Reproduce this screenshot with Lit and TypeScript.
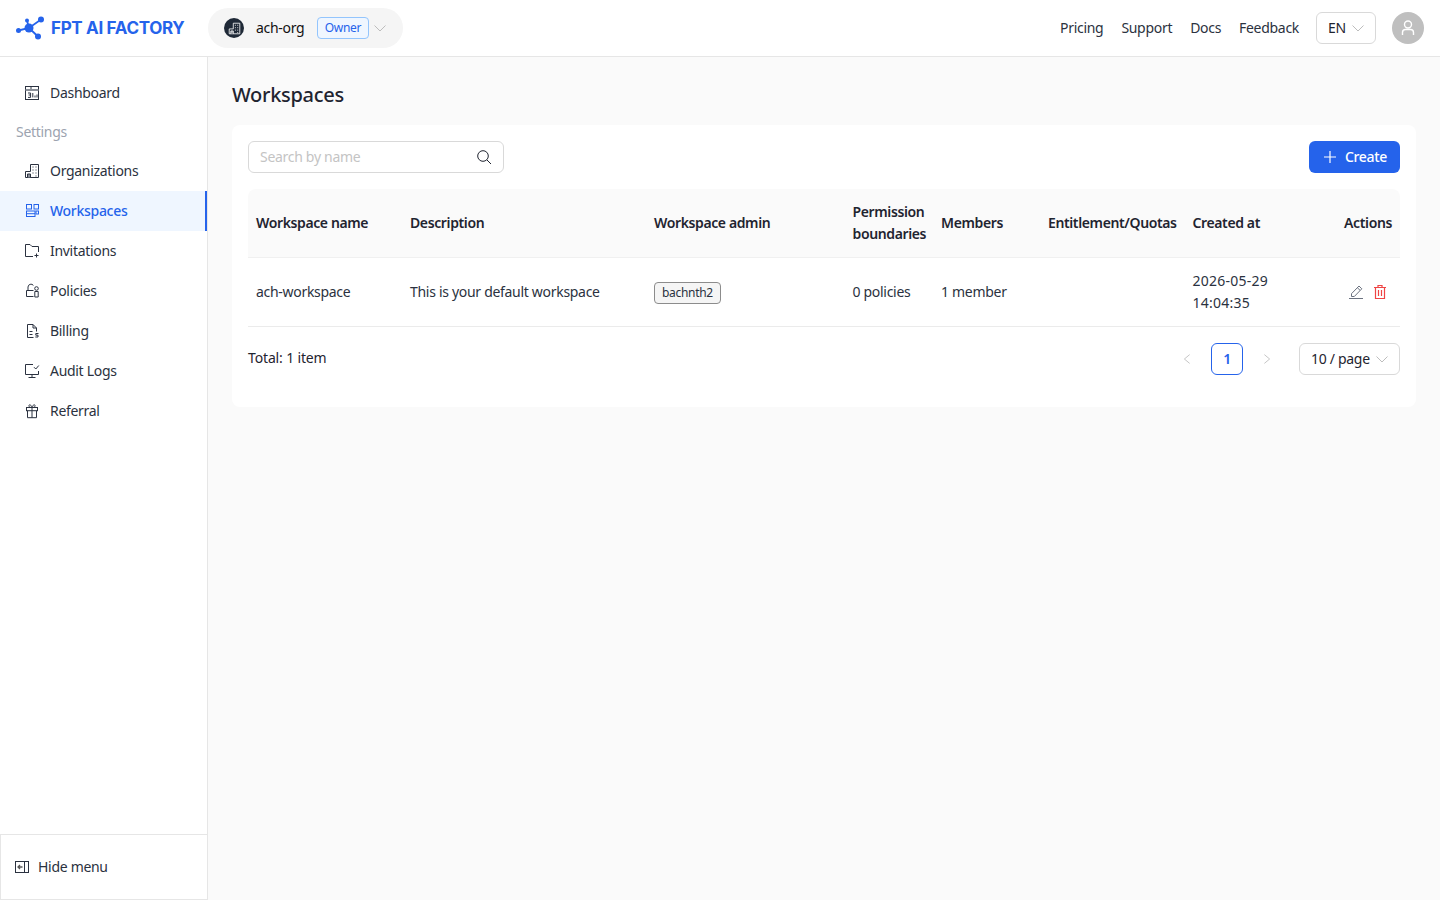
import { LitElement, html, css, svg } from "lit";
import { customElement } from "lit/decorators.js";

const ic = (body: unknown, size = 16, cls = "") => html`<svg class="ic ${cls}" width=${size} height=${size} viewBox="0 0 16 16" fill="none" stroke="currentColor" stroke-width="1">${body}</svg>`;

const icons: Record<string, unknown> = {
  dashboard: svg`<rect x="1.5" y="1.5" width="13" height="13" /><path d="M7 1.5v3" /><path d="M1.5 5h13" stroke-width="2" stroke="#8a8f98"/><path d="M4 8h2.6v2H4.6M6.6 10v2.4H4M8.8 8v4.4M11 10.5v2M13 9.5v3" />`,
  org: svg`<path d="M1.5 14.5V8.5H6.5V1.5h8v13z" /><path d="M3.5 14.5v-3.5h3v3.5" fill="#8a8f98"/><path d="M8.5 4h1M11.5 4h1M8.5 7h1M11.5 7h1M8.5 10h1M11.5 10h1M11.5 13h1" stroke-width="1.2"/>`,
  workspace: svg`<rect x="2.5" y="1.5" width="5" height="4.5" /><rect x="10" y="1.5" width="4.5" height="4.5" /><rect x="2.5" y="8" width="8.5" height="5.5" /><path d="M2.5 10.7h8.5" /><rect x="12" y="8" width="2.5" height="3" />`,
  invite: svg`<path d="M9 13.5H1.5V1.5h4.5l2 2h6.5V9" /><path d="M12.5 10.5v4M10.5 12.5h4" />`,
  policy: svg`<path d="M2.5 13.5V7.5h7M4 7.5V4a3 3 0 0 1 5.4-1.6M2.5 13.5h7" /><circle cx="12.5" cy="5.5" r="1.8" /><path d="M10.8 8.5h3.4v5.5h-3.4z" />`,
  billing: svg`<path d="M9.5 14.5H3.5v-13h5.5l3.5 3.5v3.5M9 1.5V5h3.5" /><path d="M5.5 8.5h3M5.5 11.5h3" /><path d="M14.5 10.5h-2.7v1.7h2.2v1.8h-2.7" />`,
  audit: svg`<path d="M9 1.5H1.5v10h13V8" /><path d="M8 11.5v3M4.5 14.5h7" /><path d="M10 4.2l1.8 1.8 3-3.5" />`,
  gift: svg`<rect x="2.5" y="4.5" width="11" height="3.2" /><path d="M3.5 7.7v7h9v-7M8 4.5v10.2" /><path d="M8 4.5C6 4.5 4.8 4 4.8 2.8S7 1 8 4.5c1-3.5 3.2-2.9 3.2-1.7S10 4.5 8 4.5z" />`,
  hide: svg`<rect x="1.5" y="2.5" width="13" height="11" /><path d="M10.5 2.5v11" /><path d="M8.5 8H4M6 6L4 8l2 2" stroke="#555" stroke-width="1.3"/>`,
  chev: svg`<path d="M2.5 5.5L8 11l5.5-5.5" />`,
  search: svg`<circle cx="7" cy="7" r="5.3" /><path d="M10.8 10.8L15 15" />`,
  plus: svg`<path d="M8 2v12M2 8h12" stroke-width="1.2" />`,
  edit: svg`<path d="M1 14.5h14" /><path d="M3.5 12.5v-2.8l7.5-7.7 2.8 2.8-7.5 7.7zM9.2 3.5l2.8 2.8" />`,
  trash: svg`<path d="M2 3.5h12M6 3.5v-2h4v2M3.5 3.5v11h9v-11M6.5 6v6M9.5 6v6" stroke-width="1.2" />`,
  left: svg`<path d="M11 3L5 8l6 5" />`,
  right: svg`<path d="M5 3l6 5-6 5" />`,
};

const nav = [
  ["Organizations", "org"], ["Workspaces", "workspace"], ["Invitations", "invite"],
  ["Policies", "policy"], ["Billing", "billing"], ["Audit Logs", "audit"], ["Referral", "gift"],
];

@customElement("app-root")
export class AppRoot extends LitElement {
  static styles = css`
    :host { display: flex; flex-direction: column; height: 100vh; overflow: hidden; font: 14px/22px "Noto Sans", "Open Sans", sans-serif; letter-spacing: -0.3px; color: #1f2430; background: #fafafa; }
    * { box-sizing: border-box; }
    .ic { flex: none; display: block; }
    header { height: 57px; flex: none; display: flex; align-items: center; background: #fff; border-bottom: 1px solid #e6e6e6; padding: 0 16px; }
    .logo { display: flex; align-items: center; gap: 6px; color: #2563eb; font: 700 17px/24px Inter, sans-serif; letter-spacing: -0.32px; width: 192px; white-space: nowrap; }
    .org { display: flex; align-items: center; height: 40px; width: 195px; background: #f5f5f5; border-radius: 20px; padding: 0 16px; color: #111; white-space: nowrap; }
    .org-name { width: 50px; flex: none; }
    .org-ic { width: 20px; height: 20px; flex: none; border-radius: 50%; background: #1f2937; color: #fff; display: flex; align-items: center; justify-content: center; margin-right: 12px; }
    .owner { margin-left: 11px; margin-right: 4px; height: 22px; width: 52px; text-align: center; font-size: 12px; line-height: 20px; color: #2563eb; background: #eff6ff; border: 1px solid #93c5fd; border-radius: 4px; flex: none; }
    .chev { color: #bdbdbd; }
    .org .chev { margin-left: -1px; }
    .top-links { margin-left: auto; display: flex; align-items: center; gap: 18px; color: #2b3240; }
    .lang { margin-left: 17px; display: flex; align-items: center; gap: 4px; width: 60px; height: 32px; border: 1px solid #d9d9d9; border-radius: 6px; padding: 0 0 0 11px; }
    .avatar { margin-left: 16px; width: 32px; height: 32px; border-radius: 50%; background: #bfbfbf; color: #fff; display: flex; align-items: center; justify-content: center; }
    .body { flex: 1; display: flex; min-height: 0; }
    aside { width: 208px; flex: none; background: #fff; border-right: 1px solid #e6e6e6; display: flex; flex-direction: column; padding-top: 16px; }
    .item { height: 40px; display: flex; align-items: center; gap: 10px; padding-left: 24px; color: #2b3240; }
    .item.on { background: #eff6ff; color: #2563eb; border-right: 2px solid #2563eb; font-weight: 500; }
    .group { height: 38px; line-height: 38px; padding-left: 16px; color: #9ca3af; }
    .hide { margin-top: auto; height: 66px; width: 208px; border: 1px solid #e6e6e6; display: flex; align-items: center; gap: 8px; padding-left: 13px; color: #2b3240; }
    main { flex: 1; padding: 24px; min-width: 0; }
    h1 { margin: 0 0 16px; font: 500 20px/28px "Noto Sans", sans-serif; color: #1f2430; }
    .card { background: #fff; border-radius: 8px; padding: 16px; height: 282px; }
    .bar { display: flex; justify-content: space-between; margin-bottom: 16px; }
    .search { width: 256px; height: 32px; border: 1px solid #d9d9d9; border-radius: 6px; display: flex; align-items: center; justify-content: space-between; padding: 0 11px; color: #c4c4c4; }
    .search .ic { color: #1f2430; }
    .create { width: 91px; height: 32px; border-radius: 6px; background: #2563eb; color: #fff; display: flex; align-items: center; justify-content: center; gap: 7px; font-weight: 500; }
    table { width: 100%; border-collapse: collapse; table-layout: fixed; }
    th { background: #fafafa; font-weight: 600; text-align: left; padding: 12px 8px; height: 68px; border-bottom: 1px solid #f0f0f0; color: #1f2430; letter-spacing: -0.38px; }
    td { padding: 12px 8px; height: 69px; border-bottom: 1px solid #ebebeb; color: #2b3240; }
    td.date { letter-spacing: 0.25px; }
    th:first-child { border-radius: 8px 0 0 0; }
    th:last-child { text-align: right; border-radius: 0 8px 0 0; }
    .nw { white-space: nowrap; }
    .tag { display: inline-block; height: 22px; line-height: 20px; padding: 0 7px; font-size: 12px; background: #f5f5f5; border: 1px solid #8c8c8c; border-radius: 4px; }
    .acts { display: flex; justify-content: flex-end; gap: 8px; padding-right: 4px; color: #6b7280; }
    .acts .del { color: #ef4444; }
    .foot { display: flex; align-items: flex-start; margin-top: 16px; height: 32px; }
    .total { line-height: 30px; letter-spacing: -0.15px; }
    .pg { margin-left: auto; display: flex; align-items: center; gap: 8px; color: #bdbdbd; }
    .pg .nav { width: 32px; height: 32px; display: flex; align-items: center; justify-content: center; }
    .cur { width: 32px; height: 32px; text-align: center; line-height: 30px; border: 1px solid #2563eb; border-radius: 6px; color: #2563eb; font-weight: 600; background: #fff; }
    .size { margin-left: 8px; width: 101px; height: 32px; border: 1px solid #d9d9d9; border-radius: 6px; display: flex; align-items: center; justify-content: space-between; padding: 0 9px 0 11px; color: #1f2430; }
  `;

  render() {
    return html`
      <header>
        <div class="logo">
          <svg width="29" height="24" viewBox="0 0 29 24" fill="#2563eb" stroke="#2563eb">
            <path d="M2.5 14.5L13 12L25 3.5M13 12L22 20.5M11 4.5L13 12" stroke-width="1.8" fill="none"/>
            <circle cx="2.5" cy="14.5" r="2.5" stroke="none"/><circle cx="13" cy="12" r="4.5" stroke="none"/><circle cx="25" cy="3.5" r="3" stroke="none"/><circle cx="22" cy="20.5" r="3" stroke="none"/><circle cx="11" cy="4.5" r="2" stroke="none"/>
          </svg>
          FPT AI FACTORY
        </div>
        <div class="org">
          <span class="org-ic">${ic(icons.org, 13)}</span>
          <span class="org-name">ach-org</span>
          <span class="owner">Owner</span>
          <span class="chev">${ic(icons.chev)}</span>
        </div>
        <div class="top-links">
          <span>Pricing</span><span>Support</span><span>Docs</span><span>Feedback</span>
        </div>
        <div class="lang"><span>EN</span><span class="chev">${ic(icons.chev)}</span></div>
        <div class="avatar">
          <svg width="18" height="18" viewBox="0 0 18 18" fill="none" stroke="#fff" stroke-width="1.4"><circle cx="9" cy="5.5" r="3.5"/><path d="M3.5 16v-2.5a3 3 0 0 1 3-3h5a3 3 0 0 1 3 3V16"/></svg>
        </div>
      </header>
      <div class="body">
        <aside>
          <div class="item">${ic(icons.dashboard)}Dashboard</div>
          <div class="group">Settings</div>
          ${nav.map(([label, icon]) => html`<div class="item ${label === "Workspaces" ? "on" : ""}">${ic(icons[icon])}${label}</div>`)}
          <div class="hide">${ic(icons.hide)}Hide menu</div>
        </aside>
        <main>
          <h1>Workspaces</h1>
          <div class="card">
            <div class="bar">
              <div class="search"><span>Search by name</span>${ic(icons.search)}</div>
              <div class="create">${ic(icons.plus)}Create</div>
            </div>
            <table>
              <colgroup><col style="width:154px"/><col style="width:244px"/><col style="width:198.5px"/><col style="width:88.5px"/><col style="width:107px"/><col style="width:144.5px"/><col style="width:100px"/><col/></colgroup>
              <thead><tr>
                <th>Workspace name</th><th>Description</th><th>Workspace admin</th><th>Permission boundaries</th><th>Members</th><th class="nw">Entitlement/Quotas</th><th class="nw">Created at</th><th>Actions</th>
              </tr></thead>
              <tbody><tr>
                <td>ach-workspace</td><td class="nw">This is your default workspace</td><td><span class="tag">bachnth2</span></td><td>0 policies</td><td>1 member</td><td></td><td class="date">2026-05-29 14:04:35</td>
                <td><div class="acts">${ic(icons.edit)}<span class="del">${ic(icons.trash)}</span></div></td>
              </tr></tbody>
            </table>
            <div class="foot">
              <span class="total">Total: 1 item</span>
              <div class="pg">
                <span class="nav">${ic(icons.left, 14)}</span>
                <span class="cur">1</span>
                <span class="nav">${ic(icons.right, 14)}</span>
                <div class="size"><span>10 / page</span><span class="chev">${ic(icons.chev)}</span></div>
              </div>
            </div>
          </div>
        </main>
      </div>
    `;
  }
}
